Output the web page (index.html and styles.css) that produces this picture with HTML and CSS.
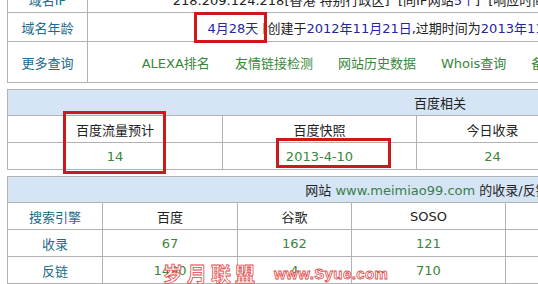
FILE: index.html
```html
<!DOCTYPE html>
<html lang="zh-CN">
<head>
    <meta charset="UTF-8">
    <title>网站综合查询</title>
    <link rel="stylesheet" href="styles.css">
</head>
<body>
    <div class="page">
        <!-- 基本信息 -->
        <table class="info">
            <colgroup>
                <col class="col-label">
                <col>
            </colgroup>
            <tr class="row-ip">
                <td class="label">域名IP</td>
                <td class="value">218.209.124.218[香港 特别行政区] &nbsp;[同IP网站<a class="blue">5个</a>] &nbsp;[响应时间:<a class="blue">0.35秒</a>] &nbsp;[IP所在地:中国香港特别行政区]</td>
            </tr>
            <tr class="row-age">
                <td class="label">域名年龄</td>
                <td class="value"><a class="blue">4月28天</a> [创建于<a class="blue">2012年11月21日</a>,过期时间为<a class="blue">2013年11月21日</a>] &nbsp;[查看该域名注册详细信息]</td>
            </tr>
            <tr class="row-more">
                <td class="label">更多查询</td>
                <td class="value">
                    <div class="links">
                        <a>ALEXA排名</a>
                        <a>友情链接检测</a>
                        <a>网站历史数据</a>
                        <a>Whois查询</a>
                        <a>备案查询</a>
                        <a>PR值查询</a>
                        <a>反链查询</a>
                        <a>收录查询</a>
                    </div>
                </td>
            </tr>
        </table>

        <!-- 百度相关 -->
        <table class="grid baidu">
            <colgroup>
                <col style="width: 215px">
                <col style="width: 194px">
                <col style="width: 152px">
                <col>
                <col>
            </colgroup>
            <tr class="head"><th colspan="5">百度相关</th></tr>
            <tr>
                <td>百度流量预计</td>
                <td>百度快照</td>
                <td>今日收录</td>
                <td>最近一周</td>
                <td>最近一月</td>
            </tr>
            <tr class="num">
                <td>14</td>
                <td>2013-4-10</td>
                <td>24</td>
                <td>98</td>
                <td>121</td>
            </tr>
        </table>

        <!-- 收录/反链 -->
        <table class="grid engines">
            <colgroup>
                <col style="width: 95px">
                <col style="width: 135px">
                <col style="width: 114px">
                <col style="width: 154px">
                <col>
                <col>
            </colgroup>
            <tr class="head"><th colspan="6">网站 <span class="site">www.meimiao99.com</span> 的收录/反链结果</th></tr>
            <tr>
                <td class="label">搜索引擎</td>
                <td>百度</td>
                <td>谷歌</td>
                <td>SOSO</td>
                <td>搜狗</td>
                <td>必应</td>
            </tr>
            <tr class="num">
                <td class="label">收录</td>
                <td>67</td>
                <td>162</td>
                <td>121</td>
                <td>86</td>
                <td>35</td>
            </tr>
            <tr class="num">
                <td class="label">反链</td>
                <td>1490</td>
                <td>4</td>
                <td>710</td>
                <td>233</td>
                <td>12</td>
            </tr>
        </table>

        <!-- 截图标注 -->
        <div class="mark mark-age"></div>
        <div class="mark mark-flow"></div>
        <div class="mark mark-snap"></div>
        <div class="watermark"><span class="wm-cn">岁月联盟</span><span class="wm-en">www.Syue.com</span></div>
    </div>
</body>
</html>
```

FILE: styles.css
```css
html, body {
    margin: 0;
    overflow: hidden;
    background-color: #fff;
}
.page {
    position: relative;
    display: flow-root;
    padding-left: 7px;
    font-family: "DejaVu Sans", "Noto Sans CJK SC", sans-serif;
    font-size: 13px;
    color: #222;
}
table {
    width: 866px;
    border-collapse: collapse;
    table-layout: fixed;
}
td, th {
    border: 1px solid #b2b2b2;
    padding: 0;
    text-align: center;
    font-weight: normal;
    white-space: nowrap;
    overflow: hidden;
}
.label {
    color: #216a8b;
}
.blue {
    color: #26269a;
}

/* 基本信息 */
.info {
    margin-top: -15px;
}
.col-label {
    width: 80px;
}
.row-ip td {
    height: 26px;
}
.row-age td {
    height: 28px;
}
.row-more td {
    height: 40px;
}
.links {
    display: flex;
    justify-content: center;
    gap: 25px;
}
.links a {
    color: #3a863a;
}

/* 表格 */
.grid {
    margin-top: 6px;
}
.grid .head th {
    height: 25px;
    background-color: #d6e5f5;
}
.grid td {
    height: 26px;
}
.num td {
    color: #3a863a;
}
.num td.label {
    color: #216a8b;
}
.site {
    color: #3a7d4a;
}

/* 红框标注 */
.mark {
    position: absolute;
    border: 3px solid #cc1a1a;
}
.mark-age {
    left: 194px;
    top: 12px;
    width: 67px;
    height: 25px;
}
.mark-flow {
    left: 63px;
    top: 111px;
    width: 97px;
    height: 57px;
}
.mark-snap {
    left: 276px;
    top: 138px;
    width: 109px;
    height: 24px;
}

/* 水印 */
.watermark {
    position: absolute;
    left: 163px;
    top: 259px;
    display: flex;
    align-items: center;
    gap: 15px;
    color: rgba(255, 255, 255, 0.85);
    -webkit-text-stroke: 0.8px #e04848;
}
.wm-cn {
    font-size: 20px;
    font-weight: bold;
    letter-spacing: 4px;
    font-family: "Noto Sans CJK SC", sans-serif;
}
.wm-en {
    font-family: "Liberation Sans", sans-serif;
    font-weight: bold;
    font-size: 15px;
    letter-spacing: 0.4px;
}
```
